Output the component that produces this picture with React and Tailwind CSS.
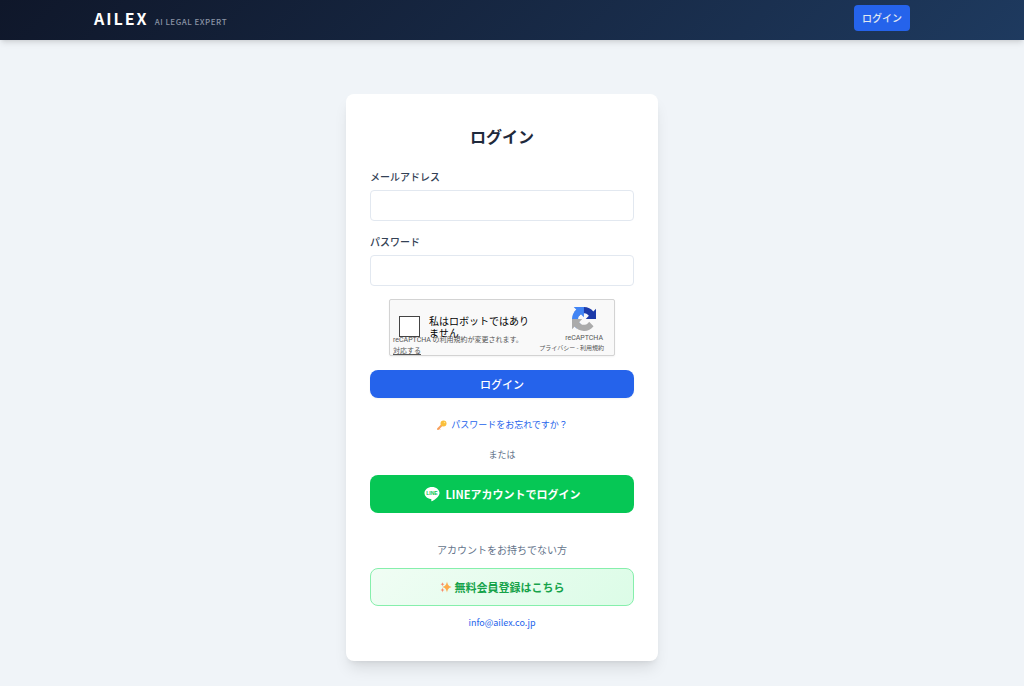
import { useState } from 'react';

function RecaptchaLogo() {
  return (
    <svg viewBox="0 0 64 64" className="size-6" aria-hidden="true">
      <path fill="#1c3aa9" d="M64 31.955l-.033-1.37V4.687l-7.16 7.16C50.948 4.674 42.033.093 32.05.093c-10.4 0-19.622 4.96-25.458 12.64l11.736 11.86a15.55 15.55 0 0 1 4.754-5.334c2.05-1.6 4.952-2.906 8.968-2.906.485 0 .86.057 1.135.163 4.976.393 9.288 3.14 11.828 7.124l-8.307 8.307L64 31.953" />
      <path fill="#4285f4" d="M31.862.094l-1.37.033H4.594l7.16 7.16C4.58 13.147 0 22.06 0 32.046c0 10.4 4.96 19.622 12.64 25.458L24.5 45.768a15.55 15.55 0 0 1-5.334-4.754c-1.6-2.05-2.906-4.952-2.906-8.968 0-.485.057-.86.163-1.135.393-4.976 3.14-9.288 7.124-11.828l8.307 8.307L31.86.095" />
      <path fill="#ababab" d="M.001 32.045l.033 1.37v25.898l7.16-7.16c5.86 7.173 14.774 11.754 24.76 11.754 10.4 0 19.622-4.96 25.458-12.64l-11.736-11.86a15.55 15.55 0 0 1-4.754 5.334c-2.05 1.6-4.952 2.906-8.968 2.906-.485 0-.86-.057-1.135-.163-4.976-.393-9.288-3.14-11.828-7.124l8.307-8.307c-10.522.04-22.4.066-27.295-.005" />
    </svg>
  );
}

function LineLogo() {
  return (
    <svg viewBox="0 0 32 32" className="size-4" aria-hidden="true">
      <path fill="#ffffff" d="M16 2C7.700 2 1 7.400 1 14.100c0 6 5.300 11 12.500 11.900 1.700.4 1.500 1.100 1.100 3.700-.1.700.3 1.200 1.300.7 1.600-.7 8.400-4.900 11.900-9C30 19 31 16.600 31 14.100 31 7.400 24.300 2 16 2z" />
      <text x="16" y="18" textAnchor="middle" fontSize="10" fontWeight="800" fill="#06c755" className="font-['Liberation_Sans',sans-serif]">LINE</text>
    </svg>
  );
}

function KeyIcon() {
  return (
    <svg viewBox="0 0 24 24" className="size-3" aria-hidden="true">
      <path d="M12 12L4 20" stroke="#f8a35c" strokeWidth="4" strokeLinecap="round" />
      <path d="M5 18l3 3" stroke="#f8935c" strokeWidth="2" />
      <circle cx="15" cy="9" r="6" fill="#fbbf3c" />
      <circle cx="17" cy="7" r="1.500" fill="#fde68a" />
    </svg>
  );
}

function SparklesIcon() {
  return (
    <svg viewBox="0 0 24 24" className="size-3" aria-hidden="true">
      <path fill="#fdab4c" d="M14 1c1.500 6.500 3 9 9 11-6 2-7.500 4.500-9 11-1.500-6.500-3-9-9-11 6-2 7.500-4.500 9-11z" />
      <path fill="#f98b6c" d="M5 2c.5 3 1.500 4 4 4.500C6.500 7 5.500 8 5 11 4.500 8 3.500 7 1 6.500 3.500 6 4.500 5 5 2zM5 13c.5 3.500 1.500 4.500 4 5-2.500.5-3.500 1.500-4 5-.5-3.500-1.500-4.500-4-5 2.500-.5 3.500-1.500 4-5z" />
    </svg>
  );
}

function Recaptcha() {
  const [checked, setChecked] = useState(false);

  return (
    <div className="relative mx-auto flex h-[57px] w-[226px] justify-between rounded-xs border border-[#d3d3d3] bg-[#f9f9f9] pr-[11px] pl-[9px] text-black shadow-xs">
      <div className="flex gap-[9px] pt-[15px]">
        <input
          type="checkbox"
          id="robot"
          checked={checked}
          onChange={e => setChecked(e.target.checked)}
          className="mt-px size-[21px] shrink-0 appearance-none border border-[#444444] bg-white checked:bg-blue-500 cursor-pointer"
        />
        <label htmlFor="robot" className="w-[108px] text-[10px] leading-3 cursor-pointer">私はロボットではありません</label>
      </div>
      <div className="flex flex-col items-center pt-[7px] text-[#555555]">
        <RecaptchaLogo />
        <span className="font-['Roboto',sans-serif] text-[7px] leading-[14px]">reCAPTCHA</span>
      </div>
      {/* terms notice overlaps the label text */}
      <p className="absolute left-[3px] top-[34px] text-[7px] leading-[10px] text-[#555555]">
        <span className="font-['Roboto',sans-serif]">reCAPTCHA</span> の利用規約が変更されます。
        <br />
        <a href="#terms-update" className="underline">対応する</a>
      </p>
      <p className="absolute right-[10px] bottom-0.5 text-[6px] leading-[10px] text-[#555555]">
        <a href="#privacy">プライバシー</a> - <a href="#terms">利用規約</a>
      </p>
    </div>
  );
}

function Field({ id, label, type, value, onChange }) {
  return (
    <div className="mb-[13px]">
      <label htmlFor={id} className="mb-[5px] block text-[10px] leading-4 font-medium text-[#334155]">{label}</label>
      <input
        id={id}
        type={type}
        value={value}
        onChange={e => onChange(e.target.value)}
        className="block h-[31px] w-full rounded border border-[#e2e8f0] bg-white px-2 text-xs outline-none focus:border-[#2563eb]"
      />
    </div>
  );
}

export default function App() {
  const [email, setEmail] = useState('');
  const [password, setPassword] = useState('');

  return (
    <div className="flex min-h-screen flex-col bg-[#f0f4f8] font-['Noto_Sans_CJK_JP',sans-serif]">
      <header className="bg-linear-135 from-[#0f172a] to-[#1e3a5f] pr-5 shadow-md">
        <div className="mx-auto flex h-10 max-w-[816px] items-center justify-between pb-[5px]">
          <a href="#home" className="flex items-baseline gap-1.5 text-white">
            <span className="text-[16px] leading-[22px] font-bold tracking-[2px]">AILEX</span>
            <span className="text-[8px] leading-3 tracking-[0.5px] font-medium text-[#8a93a5]">AI LEGAL EXPERT</span>
          </a>
          <a href="#login" className="rounded bg-[#2563eb] px-2 py-[5px] text-[10px] leading-4 font-medium text-[#e2e8f0]">ログイン</a>
        </div>
      </header>

      <main className="flex-1 pr-5 pt-[54px] pb-6">
        <div className="mx-auto w-full max-w-[312px] rounded-lg bg-white px-6 pt-[30px] pb-[30px] text-center shadow-lg">
          <h1 className="mb-[21px] text-[16px] leading-6 font-bold text-[#1e293b]">ログイン</h1>

          <form onSubmit={e => e.preventDefault()} className="text-left">
            <Field id="email" label="メールアドレス" type="email" value={email} onChange={setEmail} />
            <Field id="password" label="パスワード" type="password" value={password} onChange={setPassword} />
            <Recaptcha />
            <button type="submit" className="mt-[14px] block h-7 w-full rounded-lg bg-[#2563eb] text-[11px] leading-4 font-medium text-white shadow-xs cursor-pointer">ログイン</button>
          </form>

          <a href="#reset" className="mt-[19px] flex items-center justify-center gap-[3px] text-[9px] leading-4 text-[#2563eb]">
            <KeyIcon />
            パスワードをお忘れですか？
          </a>
          <p className="mt-[14px] text-[9px] leading-4 text-[#64748b]">または</p>

          <button type="button" className="mt-3 flex h-[38px] w-full items-center justify-center gap-1.5 rounded-lg bg-[#06c755] text-[11px] leading-4 font-bold text-white cursor-pointer">
            <LineLogo />
            LINEアカウントでログイン
          </button>

          <p className="mt-[29px] text-[10px] leading-4 text-[#64748b]">アカウントをお持ちでない方</p>
          <a href="#register" className="mt-[10px] flex h-[38px] items-center justify-center gap-[3px] rounded-lg border border-[#86efac] bg-linear-135 from-[#f0fdf4] to-[#dcfce7] text-[11px] leading-4 font-bold text-[#16a34a]">
            <SparklesIcon />
            無料会員登録はこちら
          </a>
          <a href="mailto:info@ailex.co.jp" className="mt-[9px] block text-[9px] leading-4 text-[#2563eb]">info@ailex.co.jp</a>
        </div>
      </main>
    </div>
  );
}
